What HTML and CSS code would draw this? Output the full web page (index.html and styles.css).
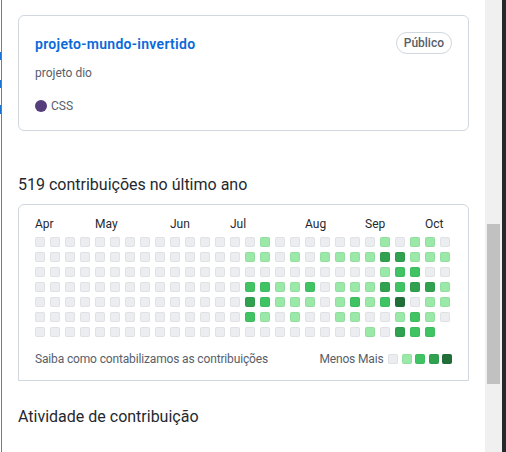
FILE: index.html
```html
<!DOCTYPE html>
<html lang="pt-BR">
<head>
<meta charset="utf-8">
<title>Perfil</title>
<link rel="stylesheet" href="styles.css">
</head>
<body>
<div class="frame">
  <div class="edge"><span class="mark m1"></span><span class="mark m2"></span><span class="mark m3"></span></div>
  <main class="main">
    <div class="card">
      <div class="card-head">
        <a class="repo" href="#">projeto-mundo-invertido</a>
        <span class="badge">Público</span>
      </div>
      <p class="desc">projeto dio</p>
      <p class="lang"><span class="dot"></span>CSS</p>
    </div>

    <h2 class="contrib-title">519 contribuições no último ano</h2>

    <div class="calendar">
      <div class="months">
        <span class="mo mo-apr">Apr</span>
        <span class="mo mo-may">May</span>
        <span class="mo mo-jun">Jun</span>
        <span class="mo mo-jul">Jul</span>
        <span class="mo mo-aug">Aug</span>
        <span class="mo mo-sep">Sep</span>
        <span class="mo mo-oct">Oct</span>
      </div>
      <div class="cells">
        <!-- weeks 1-13 -->
        <i class="c"></i><i class="c"></i><i class="c"></i><i class="c"></i><i class="c"></i><i class="c"></i><i class="c"></i>
        <i class="c"></i><i class="c"></i><i class="c"></i><i class="c"></i><i class="c"></i><i class="c"></i><i class="c"></i>
        <i class="c"></i><i class="c"></i><i class="c"></i><i class="c"></i><i class="c"></i><i class="c"></i><i class="c"></i>
        <i class="c"></i><i class="c"></i><i class="c"></i><i class="c"></i><i class="c"></i><i class="c"></i><i class="c"></i>
        <i class="c"></i><i class="c"></i><i class="c"></i><i class="c"></i><i class="c"></i><i class="c"></i><i class="c"></i>
        <i class="c"></i><i class="c"></i><i class="c"></i><i class="c"></i><i class="c"></i><i class="c"></i><i class="c"></i>
        <i class="c"></i><i class="c"></i><i class="c"></i><i class="c"></i><i class="c"></i><i class="c"></i><i class="c"></i>
        <i class="c"></i><i class="c"></i><i class="c"></i><i class="c"></i><i class="c"></i><i class="c"></i><i class="c"></i>
        <i class="c"></i><i class="c"></i><i class="c"></i><i class="c"></i><i class="c"></i><i class="c"></i><i class="c"></i>
        <i class="c"></i><i class="c"></i><i class="c"></i><i class="c"></i><i class="c"></i><i class="c"></i><i class="c"></i>
        <i class="c"></i><i class="c"></i><i class="c"></i><i class="c"></i><i class="c"></i><i class="c"></i><i class="c"></i>
        <i class="c"></i><i class="c"></i><i class="c"></i><i class="c"></i><i class="c"></i><i class="c"></i><i class="c"></i>
        <i class="c"></i><i class="c"></i><i class="c"></i><i class="c"></i><i class="c"></i><i class="c"></i><i class="c"></i>
        <!-- week 14 -->
        <i class="c"></i><i class="c"></i><i class="c"></i><i class="c"></i><i class="c"></i><i class="c"></i><i class="c"></i>
        <!-- week 15 -->
        <i class="c"></i><i class="c l1"></i><i class="c"></i><i class="c l2"></i><i class="c l3"></i><i class="c l2"></i><i class="c"></i>
        <!-- week 16 -->
        <i class="c l1"></i><i class="c l1"></i><i class="c"></i><i class="c l2"></i><i class="c l2"></i><i class="c l1"></i><i class="c"></i>
        <!-- week 17 -->
        <i class="c"></i><i class="c"></i><i class="c"></i><i class="c l1"></i><i class="c l1"></i><i class="c"></i><i class="c"></i>
        <!-- week 18 -->
        <i class="c"></i><i class="c l1"></i><i class="c"></i><i class="c l1"></i><i class="c l1"></i><i class="c l1"></i><i class="c"></i>
        <!-- week 19 -->
        <i class="c"></i><i class="c"></i><i class="c"></i><i class="c l2"></i><i class="c l1"></i><i class="c"></i><i class="c"></i>
        <!-- week 20 -->
        <i class="c"></i><i class="c l1"></i><i class="c"></i><i class="c"></i><i class="c"></i><i class="c"></i><i class="c"></i>
        <!-- week 21 -->
        <i class="c"></i><i class="c l1"></i><i class="c"></i><i class="c l1"></i><i class="c l1"></i><i class="c l1"></i><i class="c"></i>
        <!-- week 22 -->
        <i class="c"></i><i class="c l1"></i><i class="c"></i><i class="c l1"></i><i class="c l2"></i><i class="c l1"></i><i class="c"></i>
        <!-- week 23 -->
        <i class="c"></i><i class="c l1"></i><i class="c"></i><i class="c l1"></i><i class="c l1"></i><i class="c"></i><i class="c l1"></i>
        <!-- week 24 -->
        <i class="c l1"></i><i class="c l3"></i><i class="c l1"></i><i class="c l3"></i><i class="c l2"></i><i class="c"></i><i class="c"></i>
        <!-- week 25 -->
        <i class="c"></i><i class="c l3"></i><i class="c l2"></i><i class="c l2"></i><i class="c l4"></i><i class="c l1"></i><i class="c l3"></i>
        <!-- week 26 -->
        <i class="c l1"></i><i class="c l1"></i><i class="c l2"></i><i class="c l3"></i><i class="c"></i><i class="c l2"></i><i class="c l2"></i>
        <!-- week 27 -->
        <i class="c l1"></i><i class="c l1"></i><i class="c"></i><i class="c l3"></i><i class="c l1"></i><i class="c l1"></i><i class="c l2"></i>
        <!-- week 28 -->
        <i class="c"></i><i class="c l1"></i><i class="c"></i><i class="c l1"></i><i class="c l1"></i><i class="c"></i>
      </div>
      <div class="cal-foot">
        <a class="learn" href="#">Saiba como contabilizamos as contribuições</a>
        <div class="legend">
          <span class="legend-text">Menos Mais</span>
          <i class="sq"></i><i class="sq l1"></i><i class="sq l2"></i><i class="sq l3"></i><i class="sq l4"></i>
        </div>
      </div>
    </div>

    <h2 class="activity-title">Atividade de contribuição</h2>
  </main>
  <div class="scrollbar"><div class="thumb"></div></div>
  <div class="dark"></div>
</div>
</body>
</html>
```

FILE: styles.css
```css
* { box-sizing: border-box; }
html, body { margin: 0; padding: 0; }
body {
  width: 506px;
  height: 452px;
  overflow: hidden;
  background: #fff;
  font-family: Roboto, "Noto Sans", sans-serif;
  color: #24292f;
}
.frame { display: flex; height: 452px; }

.edge {
  width: 2px;
  flex: none;
  display: flex;
  flex-direction: column;
  border-right: 1px solid #7a7a7a;
}
.mark { display: block; width: 1px; background: #1a73d0; }
.m1 { margin-top: 52px; height: 8px; }
.m2 { margin-top: 20px; height: 8px; }
.m3 { margin-top: 17px; height: 9px; }

.main { flex: 1; min-width: 0; padding: 15px 16px 0; }

.card {
  border: 1px solid #d0d7de;
  border-radius: 6px;
  padding: 16px 16px 15px;
  height: 116px;
  display: flex;
  flex-direction: column;
}
.card-head {
  display: flex;
  justify-content: space-between;
  align-items: center;
  height: 22px;
}
.repo {
  color: #0969da;
  font-weight: 600;
  font-size: 14px;
  letter-spacing: 0.3px;
  padding-top: 2px;
  text-decoration: none;
}
.badge {
  border: 1px solid #d0d7de;
  border-radius: 2em;
  padding: 0 7px;
  font-size: 12px;
  line-height: 20px;
  color: #57606a;
  font-weight: 500;
}
.desc { margin: 10px 0 0; font-size: 12px; line-height: 18px; color: #57606a; }
.lang {
  margin: auto 0 0;
  font-size: 12px;
  line-height: 18px;
  color: #57606a;
  display: flex;
  align-items: center;
}
.dot {
  width: 12px;
  height: 12px;
  border-radius: 50%;
  background: #563d7c;
  margin-right: 4px;
}

.contrib-title {
  margin: 42px 0 7px;
  font-size: 16px;
  font-weight: 400;
  line-height: 24px;
}

.calendar {
  border: 1px solid #d0d7de;
  border-radius: 6px 6px 0 0;
  padding: 10px 16px 12px;
}
.months {
  display: grid;
  grid-template-columns: repeat(28, 10px);
  column-gap: 5px;
  height: 18px;
  margin-bottom: 4px;
  font-size: 12px;
  line-height: 18px;
  color: #24292f;
}
.mo { white-space: nowrap; grid-row: 1; }
.mo-apr { grid-column: 1; }
.mo-may { grid-column: 5; }
.mo-jun { grid-column: 10; }
.mo-jul { grid-column: 14; }
.mo-aug { grid-column: 19; }
.mo-sep { grid-column: 23; }
.mo-oct { grid-column: 27; }

.cells {
  display: grid;
  grid-template-rows: repeat(7, 10px);
  grid-auto-flow: column;
  grid-auto-columns: 10px;
  gap: 5px;
}
.c, .sq {
  display: block;
  width: 10px;
  height: 10px;
  border-radius: 2px;
  background: #ebedf0;
  box-shadow: inset 0 0 0 1px rgba(27, 31, 35, 0.06);
}
.l1 { background: #9be9a8; }
.l2 { background: #40c463; }
.l3 { background: #30a14e; }
.l4 { background: #216e39; }

.cal-foot {
  display: flex;
  justify-content: space-between;
  align-items: center;
  margin-top: 13px;
  font-size: 12px;
  line-height: 18px;
  color: #57606a;
}
.learn { color: #57606a; text-decoration: none; letter-spacing: -0.15px; }
.legend { display: flex; align-items: center; gap: 3.5px; }
.legend-text { margin-right: 1px; letter-spacing: -0.15px; }

.activity-title {
  margin: 24px 0 0;
  font-size: 16px;
  font-weight: 400;
  line-height: 24px;
}

.scrollbar {
  width: 17px;
  flex: none;
  background: #f0f0f0;
  padding: 224px 2px 0;
}
.thumb { height: 160px; background: #c1c1c1; }
.dark { width: 4px; flex: none; background: #25292c; }
```
